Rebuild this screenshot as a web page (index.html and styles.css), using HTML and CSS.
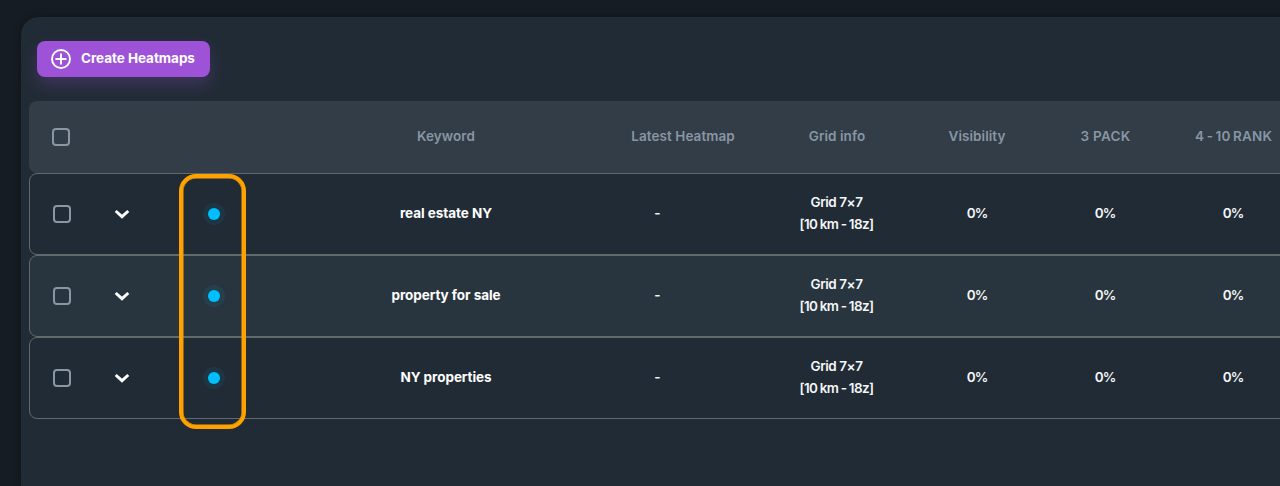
FILE: index.html
```html
<!DOCTYPE html>
<html lang="en">
<head>
<meta charset="utf-8">
<title>Heatmaps</title>
<link rel="stylesheet" href="styles.css">
</head>
<body>
<main class="panel">
  <button class="create" type="button">
    <svg class="plus" viewBox="0 0 20 20"><circle cx="10" cy="10" r="9"/><path d="M10 5.2v9.6M5.2 10h9.6"/></svg>
    <span class="create-label">Create Heatmaps</span>
  </button>
  <section class="table">
    <div class="row head">
      <span class="cell"><i class="check"></i></span><span></span><span></span>
      <span class="cell">Keyword</span>
      <span class="cell">Latest Heatmap</span>
      <span class="cell">Grid info</span>
      <span class="cell">Visibility</span>
      <span class="cell caps">3 PACK</span>
      <span class="cell rank">4 - 10 RANK</span>
    </div>
    <div class="row">
      <span class="cell"><i class="check"></i></span>
      <span class="cell"><svg class="chevron" viewBox="0 0 16 10"><path d="M1.7 2 8 7.7l6.3-5.7"/></svg></span>
      <span class="cell status"><i class="dot"></i></span>
      <span class="cell keyword">real estate NY</span>
      <span class="cell latest">-</span>
      <span class="cell info"><span class="size">Grid 7×7</span><span class="range">[10 km - 18z]</span></span>
      <span class="cell pct">0%</span><span class="cell pct">0%</span><span class="cell pct">0%</span>
    </div>
    <div class="row alt">
      <span class="cell"><i class="check"></i></span>
      <span class="cell"><svg class="chevron" viewBox="0 0 16 10"><path d="M1.7 2 8 7.7l6.3-5.7"/></svg></span>
      <span class="cell status"><i class="dot"></i></span>
      <span class="cell keyword">property for sale</span>
      <span class="cell latest">-</span>
      <span class="cell info"><span class="size">Grid 7×7</span><span class="range">[10 km - 18z]</span></span>
      <span class="cell pct">0%</span><span class="cell pct">0%</span><span class="cell pct">0%</span>
    </div>
    <div class="row">
      <span class="cell"><i class="check"></i></span>
      <span class="cell"><svg class="chevron" viewBox="0 0 16 10"><path d="M1.7 2 8 7.7l6.3-5.7"/></svg></span>
      <span class="cell status"><i class="dot"></i></span>
      <span class="cell keyword">NY properties</span>
      <span class="cell latest">-</span>
      <span class="cell info"><span class="size">Grid 7×7</span><span class="range">[10 km - 18z]</span></span>
      <span class="cell pct">0%</span><span class="cell pct">0%</span><span class="cell pct">0%</span>
    </div>
    <div class="highlight"></div>
  </section>
</main>
</body>
</html>
```
FILE: styles.css
```css
* { box-sizing: border-box; }
body {
  margin: 0;
  height: 486px;
  padding: 17px 0 0 21px;
  overflow: hidden;
  background: #161c23;
  font-family: Inter, "Liberation Sans", sans-serif;
  font-size: 13.5px;
  color: #f4f6f8;
}
.panel {
  width: 1300px;
  height: 469px;
  padding: 24px 0 0 8px;
  border-radius: 18px 0 0 0;
  background: #212b35;
  box-shadow: 0 0 8px rgba(0, 0, 0, .3);
}
.create {
  display: flex;
  align-items: center;
  gap: 10px;
  width: 173px;
  height: 36px;
  margin: 0 0 24px 8px;
  padding: 0 0 0 14px;
  border: 0;
  border-radius: 8px;
  background: #9d52d8;
  box-shadow: 0 8px 16px rgba(157, 82, 216, .24);
  color: #fff;
  font: 700 13.5px Inter, sans-serif;
}
.create-label { white-space: nowrap; letter-spacing: -.04px; padding-bottom: 2px; }
.plus { width: 20px; height: 20px; fill: none; stroke: #fff; stroke-width: 1.9; stroke-linecap: round; }
.table { position: relative; width: 1290px; }
.row {
  display: grid;
  grid-template-columns: 63px 57px 137px 318px 156px 152px 128px 128px 128px;
  height: 82px;
  border: 1px solid #62696d;
  border-radius: 8px;
}
.alt { background: #29353e; }
.head {
  height: 72px;
  border: 0;
  padding-left: 1px;
  background: #333d47;
  color: #8896a4;
  font-weight: 600;
  letter-spacing: .06px;
}
.cell { display: flex; align-items: center; justify-content: center; white-space: nowrap; }
.head .cell { padding-bottom: 2px; }
.head .cell:first-child { padding: 0 2px 0 0; }
.head .caps { letter-spacing: .3px; padding-left: 1px; }
.head .rank { letter-spacing: .15px; word-spacing: -1px; padding-left: 1px; }
.check { width: 18px; height: 18px; border: 2px solid #8997a3; border-radius: 4px; }
.chevron { width: 16px; height: 10px; fill: none; stroke: #fff; stroke-width: 2.9; }
.status { padding-right: 9px; }
.dot { width: 12px; height: 12px; border-radius: 50%; background: #00bfff; box-shadow: 0 0 0 5px rgba(0, 191, 255, .08); }
.keyword { color: #fff; font-weight: 700; letter-spacing: -.05px; padding-bottom: 2px; }
.latest { padding: 0 51px 2px 0; font-weight: 600; }
.info { flex-direction: column; line-height: 22px; font-weight: 600; padding: 0 1px 2px 0; }
.size { letter-spacing: -.45px; }
.range { letter-spacing: -.6px; word-spacing: -.4px; }
.pct { font-weight: 600; letter-spacing: -.9px; font-size: 13.5px; padding-bottom: 3px; }
.highlight {
  position: absolute;
  left: 150px;
  top: 73px;
  width: 67px;
  height: 255px;
  border: 4px solid #ffa200;
  border-radius: 17px;
  box-shadow: inset 0 0 0 .5px #ffa200;
}
```
